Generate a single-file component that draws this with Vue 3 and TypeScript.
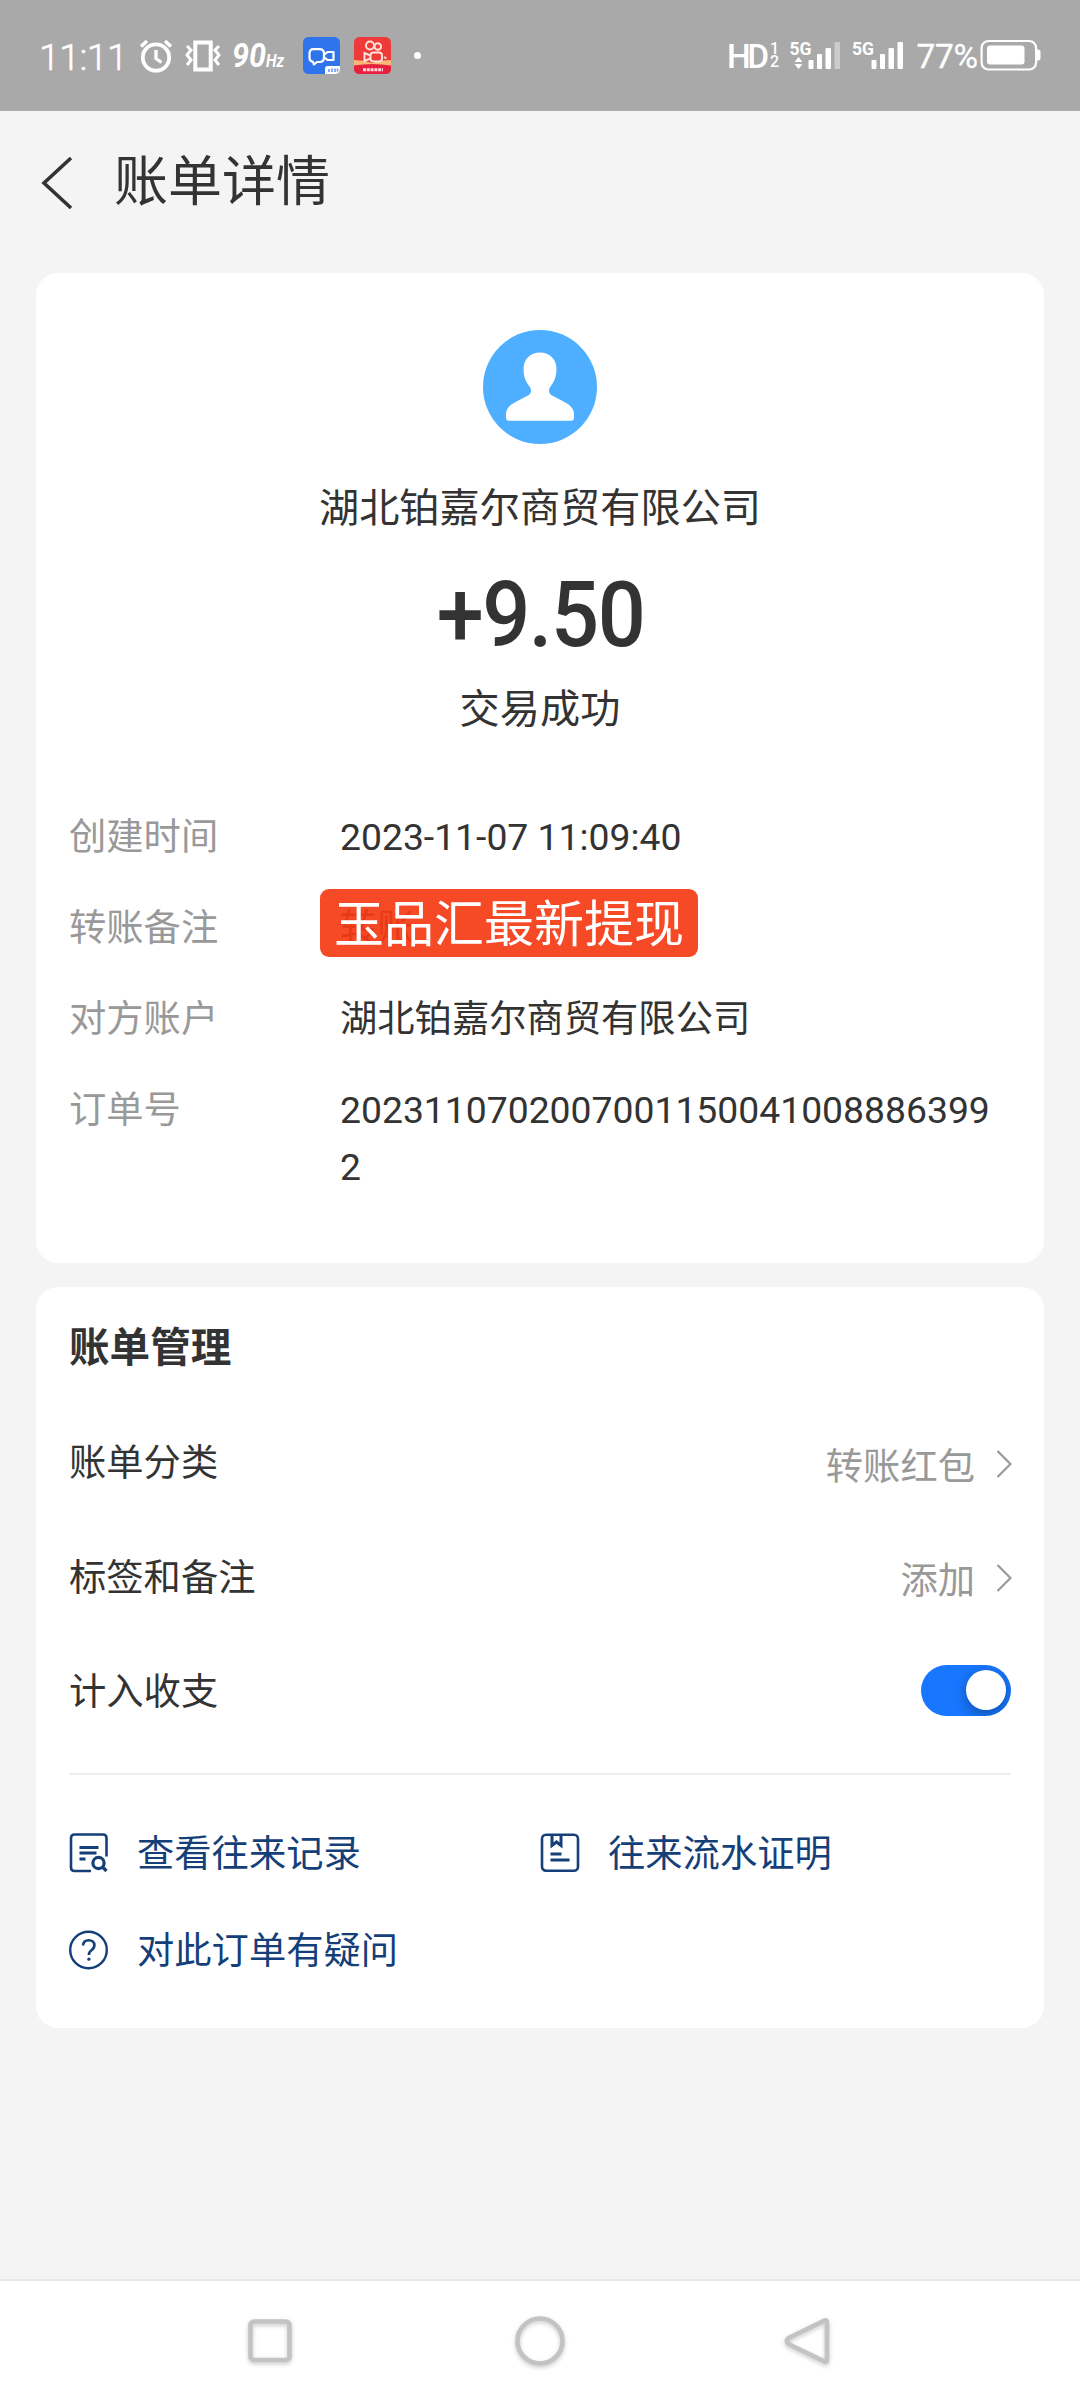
<script setup lang="ts">
interface InfoRow {
  label: string
  value: string
  badge?: string
}

interface ManageRow {
  label: string
  value?: string
  toggle?: boolean
}

interface LinkItem {
  label: string
  icon: 'search' | 'proof' | 'help'
}

const infoRows: InfoRow[] = [
  { label: '创建时间', value: '2023-11-07 11:09:40' },
  { label: '转账备注', value: '转账', badge: '玉品汇最新提现' },
  { label: '对方账户', value: '湖北铂嘉尔商贸有限公司' },
  { label: '订单号', value: '20231107020070011500410088863992' },
]

const manageRows: ManageRow[] = [
  { label: '账单分类', value: '转账红包' },
  { label: '标签和备注', value: '添加' },
  { label: '计入收支', toggle: true },
]

const links: LinkItem[] = [
  { label: '查看往来记录', icon: 'search' },
  { label: '往来流水证明', icon: 'proof' },
  { label: '对此订单有疑问', icon: 'help' },
]
</script>

<template>
  <div class="screen">
    <div class="status">
      <div class="status-left">
        <span class="time">11:11</span>
        <svg class="alarm" width="34" height="34" viewBox="0 0 34 34" fill="none" stroke="#fff">
          <circle cx="17" cy="18.500" r="13.200" stroke-width="3.800" />
          <path d="M17 11v8.500l5.500 4" stroke-width="3.400" />
          <path d="M2 7.500l6-5.500M32 7.500l-6-5.500" stroke-width="3.600" />
        </svg>
        <svg class="vibrate" width="36" height="32" viewBox="0 0 36 32" fill="none" stroke="#fff">
          <rect x="10.300" y="2.500" width="15.400" height="27" stroke-width="4" />
          <path d="M2 6l4 4-4 5 4 5-4 5M34 6l-4 4 4 5-4 5 4 5" stroke-width="3" />
        </svg>
        <svg class="hz" width="60" height="48" viewBox="0 -7 60 48" fill="#fff" font-style="italic" font-weight="700">
          <text x="1" y="28" font-size="33.500" textLength="34" lengthAdjust="spacingAndGlyphs">90</text>
          <text x="35" y="28" font-size="18" textLength="18" lengthAdjust="spacingAndGlyphs">Hz</text>
        </svg>
        <svg class="app" width="37" height="37" viewBox="0 0 37 37">
          <rect width="37" height="37" rx="5.500" fill="#2f74ea" />
          <g fill="none" stroke="#fff" stroke-width="2.200" stroke-linejoin="round">
            <path d="M10.500 12.200h6q4.500 0 4.500 4.500v3.800q0 4.500-4.500 4.500h-2.500l-3 2.500-1-2.700q-3.500-.5-3.500-4.300v-3.800q0-4.500 4-4.500z" />
            <path d="M21.500 17.500l3-2.500h6v8h-6l-3-2.500" />
          </g>
          <path d="M24.500 29h12.500v2.500q0 5.500-5.500 5.500h-9.500v-5q0-3 2.500-3z" fill="#fff" />
          <path d="M26 32v3M29 31.500v3.500M32 31.500v3.500M34.500 31.500v3" stroke="#5c8ff0" stroke-width="1.500" />
        </svg>
        <svg class="app app-red" width="37" height="37" viewBox="0 0 37 37">
          <defs>
            <clipPath id="redClip"><rect width="37" height="37" rx="5.500" /></clipPath>
          </defs>
          <g clip-path="url(#redClip)">
            <rect width="37" height="37" fill="#ee3b3a" />
            <path d="M0 23q9 0 18 3 9-3 19-3v7H0z" fill="#f8b878" />
            <path d="M0 28.500q18-3 37 0v8.500H0z" fill="#e8203f" />
          </g>
          <g fill="none" stroke="#ffe4da" stroke-width="1.900">
            <circle cx="16" cy="8.500" r="4" />
            <circle cx="23.800" cy="9.500" r="3.300" />
            <rect x="16.500" y="15.500" width="11.500" height="9" rx="3" />
            <path d="M16.500 18.500l-6-2.500v8l6-2.500M30 20l2.500 1.500" />
          </g>
          <path d="M9 32.800h20" stroke="#ffd9dc" stroke-width="3" stroke-dasharray="3 .8" />
        </svg>
        <span class="dot"></span>
      </div>
      <svg class="status-right" width="316" height="40" viewBox="0 0 316 40" fill="#fff">
        <text x="1" y="32" font-size="33.500" font-weight="500" textLength="42">HD</text>
        <text x="44" y="17.500" font-size="16" font-weight="500">1</text>
        <text x="44" y="31" font-size="16" font-weight="500">2</text>
        <text x="63.500" y="19" font-size="18.500" font-weight="700" textLength="22" lengthAdjust="spacingAndGlyphs">5G</text>
        <path d="M72.500 21l4 5h-8zM72.500 33l4-5h-8z" />
        <rect x="82.500" y="24" width="5" height="9" rx="1" />
        <rect x="91" y="18" width="5" height="15" rx="1" />
        <rect x="99.500" y="12" width="5.500" height="21" rx="1" />
        <rect x="108.500" y="6" width="5.500" height="27" rx="1" opacity=".4" />
        <text x="126" y="19" font-size="18.500" font-weight="700" textLength="22" lengthAdjust="spacingAndGlyphs">5G</text>
        <rect x="145.500" y="24" width="5" height="9" rx="1" />
        <rect x="154" y="18" width="5" height="15" rx="1" />
        <rect x="162.500" y="12" width="5.500" height="21" rx="1" />
        <rect x="171.500" y="6" width="5.500" height="27" rx="1" />
        <text x="190.500" y="32" font-size="33.500" textLength="61.500" stroke="#fff" stroke-width=".3">77%</text>
        <rect x="255.600" y="5" width="54.500" height="28.500" rx="7" fill="none" stroke="#fff" stroke-width="2.200" />
        <rect x="261" y="9.500" width="37.500" height="19" rx="3" />
        <path d="M310.500 13.500h1.500q2.500 0 2.500 2.500v6q0 2.500-2.500 2.500h-1.500z" />
      </svg>
    </div>

    <header class="header">
      <svg class="back" width="34" height="56" viewBox="0 0 34 56" fill="none" stroke="#333" stroke-width="3.600">
        <path d="M31 3L4 28l27 25" />
      </svg>
      <h1 class="title">账单详情</h1>
    </header>

    <section class="card detail">
      <svg class="avatar" width="114" height="114" viewBox="0 0 114 114">
        <circle cx="57" cy="57" r="57" fill="#4eaeff" />
        <path
          d="M57 22.500c10 0 16.500 7 16.500 16.500 0 8-2.500 13-6 17.500-2.500 3.500-2 7 1.500 9 5 3 10.500 5 15 8 5.500 3.500 7 7 7 11v3q0 3.300-3 3.300H26q-3 0-3-3.300v-3c0-4 1.500-7.500 7-11 4.500-3 10-5 15-8 3.500-2 4-5.500 1.500-9-3.500-4.500-6-9.500-6-17.500 0-9.500 6.500-16.500 16.500-16.500z"
          fill="#fff"
        />
      </svg>
      <div class="payee">湖北铂嘉尔商贸有限公司</div>
      <div class="amount">+9.50</div>
      <div class="state">交易成功</div>

      <dl class="info">
        <div v-for="row in infoRows" :key="row.label" class="info-row">
          <dt>{{ row.label }}</dt>
          <dd>
            {{ row.value }}
            <span v-if="row.badge" class="badge">{{ row.badge }}</span>
          </dd>
        </div>
      </dl>
    </section>

    <section class="card manage">
      <h2 class="manage-title">账单管理</h2>
      <div v-for="row in manageRows" :key="row.label" class="manage-row">
        <span>{{ row.label }}</span>
        <span v-if="row.toggle" class="toggle"><span class="knob"></span></span>
        <span v-else class="manage-value">
          {{ row.value }}
          <svg width="17" height="30" viewBox="0 0 17 30" fill="none" stroke="#999" stroke-width="2.200">
            <path d="M2.500 2l13 13-13 13" />
          </svg>
        </span>
      </div>
      <div class="divider"></div>
      <div class="links">
        <div v-for="link in links" :key="link.label" class="link">
          <svg
            v-if="link.icon === 'search'"
            width="40" height="40" viewBox="0 0 40 40" fill="none" stroke="currentColor" stroke-width="2.600"
          >
            <path d="M37.500 23.500V5q0-3.500-3.500-3.500H5.500Q2 1.500 2 5v29.500Q2 38 5.500 38H22" />
            <path d="M10.500 14.500h19M10.500 20h17M10.500 26h6" stroke-width="3" />
            <circle cx="29.500" cy="30" r="5.600" stroke-width="3.200" />
            <path d="M33.500 34l4 4" stroke-width="3.200" />
          </svg>
          <svg
            v-else-if="link.icon === 'proof'"
            width="40" height="40" viewBox="0 0 40 40" fill="none" stroke="currentColor" stroke-width="2.600"
          >
            <rect x="2" y="1.700" width="36" height="36" rx="4" />
            <path d="M12 2v10.500l4.500-3.500 4.500 3.500V2M10.500 21h11M10.500 27h19" stroke-width="3" />
          </svg>
          <svg
            v-else
            width="40" height="40" viewBox="0 0 40 40" fill="none" stroke="currentColor" stroke-width="2.400"
          >
            <circle cx="19.500" cy="20" r="18.300" />
            <path d="M14 15.500c.3-3.500 2.500-5.300 5.700-5.300s5.700 2 5.700 5c0 2.500-1.400 3.800-3 5-1.700 1.200-2.500 2.200-2.500 4.800" stroke-width="2.600" />
            <circle cx="19.900" cy="29.200" r="1.600" fill="currentColor" stroke="none" />
          </svg>
          <span class="link-text">{{ link.label }}</span>
        </div>
      </div>
    </section>

    <nav class="nav">
      <svg width="60" height="60" viewBox="0 0 60 60"><rect x="10.500" y="10.500" width="39" height="38.500" rx="3.500" /></svg>
      <svg width="60" height="60" viewBox="0 0 60 60"><circle cx="30" cy="30" r="22.500" /></svg>
      <svg width="60" height="60" viewBox="0 0 60 60"><path d="M44.500 9.500q2.500-1 2.500 2v37q0 3-2.500 2L8.500 33q-3-3 0-6z" /></svg>
    </nav>
  </div>
</template>

<style>
body {
  margin: 0;
  background: #f4f4f4;
}
</style>

<style scoped>
.screen {
  display: flex;
  flex-direction: column;
  width: 1080px;
  height: 2400px;
  background: #f4f4f4;
  color: #333;
  font-family: Roboto, "Noto Sans CJK SC", sans-serif;
  font-size: 37.3px;
  overflow: hidden;
}

svg {
  display: block;
  flex: none;
}

.status {
  display: flex;
  justify-content: space-between;
  height: 111px;
  padding: 0 38px 0 39px;
  background: #a9a9a9;
  color: #fff;
  box-sizing: border-box;
}

.status-left {
  display: flex;
  align-items: center;
  height: 110px;
}

.time {
  width: 100px;
  padding-top: 3px;
  font-size: 37.5px;
  font-weight: 300;
  line-height: 40px;
  letter-spacing: -0.6px;
  white-space: nowrap;
  box-sizing: border-box;
  -webkit-text-stroke: 0.5px #fff;
}

.alarm {
  margin-top: 1px;
}

.vibrate {
  margin-top: 2px;
  margin-left: 12px;
}

.hz {
  margin-top: 2px;
  margin-left: 10px;
}

.app {
  margin-left: 12px;
}

.app-red {
  margin-left: 14px;
}

.dot {
  width: 7px;
  height: 7px;
  margin-left: 23px;
  border-radius: 50%;
  background: #fff;
}

.status-right {
  margin-top: 36px;
}

.header {
  display: flex;
  align-items: center;
  height: 142px;
  margin-bottom: 20px;
  padding-left: 40px;
}

.title {
  margin: 2px 0 0 40px;
  font-size: 54px;
  font-weight: 400;
  line-height: 80px;
}

.back {
  margin-top: 2px;
}

.card {
  margin: 0 36px;
  border-radius: 22px;
  background: #fff;
  box-sizing: border-box;
}

.detail {
  display: flex;
  flex-direction: column;
  align-items: center;
  height: 990px;
  padding-top: 57px;
}

.payee,
.state {
  font-size: 40.2px;
  line-height: 60px;
}

.payee {
  margin-top: 35px;
}

.amount {
  margin-top: 27px;
  font-size: 90px;
  font-weight: 500;
  line-height: 100px;
  letter-spacing: -1.5px;
  transform: scaleX(0.94);
}

.state {
  margin-top: 14px;
}

.info {
  display: flex;
  flex-direction: column;
  gap: 34px;
  width: 100%;
  margin: 68.5px 0 0;
  line-height: 57px;
}

.info-row {
  display: flex;
}

.info-row dt {
  width: 271px;
  padding-left: 33px;
  flex: none;
  color: #999;
}

.info-row dd {
  position: relative;
  width: 660px;
  margin: 0;
  word-break: break-all;
}

.badge {
  position: absolute;
  top: -11px;
  left: -20px;
  height: 68px;
  width: 378px;
  border-radius: 9px;
  background: rgba(245, 57, 19, 0.92);
  color: #fff;
  font-size: 50px;
  line-height: 72px;
  text-align: center;
  white-space: nowrap;
}

.manage {
  height: 741px;
  margin-top: 24px;
  padding: 31px 33px 0;
}

.manage-title {
  margin: 0 0 25px;
  font-size: 40.6px;
  font-weight: 700;
  line-height: 60px;
}

.manage-row {
  display: flex;
  align-items: center;
  justify-content: space-between;
  height: 114.5px;
}

.manage-value {
  display: flex;
  align-items: center;
  gap: 20px;
  margin-right: -1px;
  padding-top: 7px;
  color: #999;
}

.toggle {
  display: flex;
  align-items: center;
  justify-content: flex-end;
  width: 90px;
  height: 51px;
  margin-top: 2px;
  padding-right: 5.5px;
  border-radius: 26px;
  background: #1777ff;
  box-sizing: border-box;
  overflow: hidden;
}

.knob {
  width: 40px;
  height: 40px;
  border-radius: 50%;
  background: #fff;
  box-shadow: 0 4px 14px rgba(0, 0, 0, 0.35);
}

.divider {
  height: 2px;
  margin-top: 26px;
  background: #eee;
}

.links {
  display: grid;
  grid-template-columns: 471px 471px;
  grid-auto-rows: 97px;
  margin-top: 30px;
  color: #153f79;
}

.link {
  display: flex;
  align-items: center;
  gap: 28px;
}

.link-text {
  padding-bottom: 4px;
}

.nav {
  display: grid;
  grid-template-columns: repeat(3, 270px);
  justify-content: center;
  justify-items: center;
  align-items: center;
  height: 121px;
  margin-top: auto;
  border-top: 2px solid #e8e8e8;
  background: #fff;
  box-sizing: border-box;
}

.nav svg {
  fill: none;
  stroke: #c3c3c3;
  stroke-width: 4.6;
  stroke-linejoin: round;
  filter: drop-shadow(0 2px 2px rgba(0, 0, 0, 0.2));
}
</style>
